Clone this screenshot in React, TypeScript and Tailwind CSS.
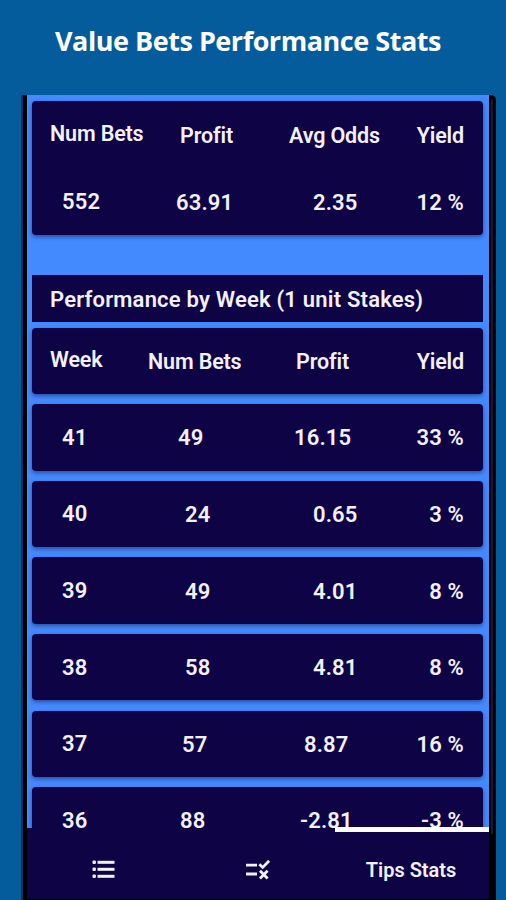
import clsx from 'clsx';

interface Cell {
    text: string;
    // left offset inside the column
    pad: string;
}

interface WeekRow {
    week: string;
    bets: Cell;
    profit: Cell;
    yieldPct: string;
}

const weeks: WeekRow[] = [
    { week: '41', bets: { text: '49', pad: 'pl-[30px]' }, profit: { text: '16.15', pad: 'pl-[6px]' }, yieldPct: '33 %' },
    { week: '40', bets: { text: '24', pad: 'pl-[37px]' }, profit: { text: '0.65', pad: 'pl-[25px]' }, yieldPct: '3 %' },
    { week: '39', bets: { text: '49', pad: 'pl-[37px]' }, profit: { text: '4.01', pad: 'pl-[25px]' }, yieldPct: '8 %' },
    { week: '38', bets: { text: '58', pad: 'pl-[37px]' }, profit: { text: '4.81', pad: 'pl-[25px]' }, yieldPct: '8 %' },
    { week: '37', bets: { text: '57', pad: 'pl-[34px]' }, profit: { text: '8.87', pad: 'pl-[16px]' }, yieldPct: '16 %' },
    { week: '36', bets: { text: '88', pad: 'pl-[32px]' }, profit: { text: '-2.81', pad: 'pl-[12px]' }, yieldPct: '-3 %' },
];

const card = 'bg-[#0e0345] rounded-[4px] shadow-[0_2px_4px_rgba(20,30,80,0.55)]';
const columns = 'grid grid-cols-[116px_140px_112px_1fr] items-center pr-[19px]';
const heading = 'text-[21.5px] tracking-[-0.15px]';
const figures = 'tracking-[0.15px]';

function ListIcon() {
    return (
        <svg className="w-6 h-5" viewBox="0 0 24 20" fill="currentColor">
            {[0.5, 7.5, 14.5].map((y) => (
                <g key={y}>
                    <rect x="0.5" y={y} width="3.4" height="3.6" rx="1" />
                    <rect x="5.5" y={y + 0.3} width="17" height="3" />
                </g>
            ))}
        </svg>
    );
}

function RuleIcon() {
    return (
        <svg className="w-6 h-5" viewBox="0 0 24 20" fill="none" stroke="currentColor" strokeWidth="2.8">
            <path d="M0 5.2h11M0 14h11" />
            <path d="M13.3 4.2l3.4 3.2 6.4-6.6M14 10.8l7.6 7.6M21.6 10.8l-7.6 7.6" />
        </svg>
    );
}

export default function App() {
    return (
        <div className="w-[506px] h-[900px] overflow-hidden bg-[#045c9c] text-[#f3f0fa] font-['Roboto',sans-serif] flex flex-col">
            <h1 className="h-[95px] pt-[23px] pl-[55px] text-[27px] leading-[36px] tracking-[-0.47px] font-bold text-white font-['Open_Sans',sans-serif] whitespace-nowrap">
                Value Bets Performance Stats
            </h1>

            {/* Phone frame */}
            <div className="ml-[21px] w-[475px] h-[805px] flex bg-black rounded-tr-[5px] border-l-2 border-l-[#0b2f66]">
                <div className="ml-[4px] w-[462px] flex flex-col bg-[#448aff] text-[22px] leading-[26px] font-semibold whitespace-nowrap">
                    <div className="h-[733px] overflow-hidden pl-[5px] pr-[6px] pt-[6px]">
                        {/* Totals */}
                        <div className={clsx(card, 'h-[134px] pt-[18px]')}>
                            <div className={clsx(columns, heading, 'h-[34px]')}>
                                <span className="pl-[18px] pb-1">Num Bets</span>
                                <span className="pl-[32px]">Profit</span>
                                <span className="pl-[1px]">Avg Odds</span>
                                <span className="text-right">Yield</span>
                            </div>
                            <div className={clsx(columns, figures, 'mt-[33px] h-[34px]')}>
                                <span className="pl-[30px] pb-0.5">552</span>
                                <span className="pl-[28px]">63.91</span>
                                <span className="pl-[25px]">2.35</span>
                                <span className="text-right">12 %</span>
                            </div>
                        </div>

                        {/* Section title */}
                        <div className="mt-[40px] h-[47px] flex items-center bg-[#0e0345] pl-[18px] pt-[2px] tracking-[0.2px]">
                            Performance by Week (1 unit Stakes)
                        </div>

                        <div className={clsx(card, columns, heading, 'mt-[6px] h-[66px] pt-0.5')}>
                            <span className="pl-[18px] pb-[4px]">Week</span>
                            <span>Num Bets</span>
                            <span className="pl-[8px]">Profit</span>
                            <span className="text-right">Yield</span>
                        </div>

                        {weeks.map((row) => (
                            <div key={row.week} className={clsx(card, columns, figures, 'mt-[10.2px] h-[66.4px] pt-[2px]')}>
                                <span className="pl-[30px] pb-px">{row.week}</span>
                                <span className={row.bets.pad}>{row.bets.text}</span>
                                <span className={row.profit.pad}>{row.profit.text}</span>
                                <span className="text-right">{row.yieldPct}</span>
                            </div>
                        ))}
                    </div>

                    {/* Bottom tabs */}
                    <div className="relative h-[71px] grid grid-cols-3 items-center bg-[#0e0345] pt-[13px]">
                        <div className="absolute -top-px right-0 h-[5px] w-[154px] bg-white" />
                        <span className="flex justify-center">
                            <ListIcon />
                        </span>
                        <span className="flex justify-center">
                            <RuleIcon />
                        </span>
                        <span className="text-center text-[20px] pr-0.5">Tips Stats</span>
                    </div>
                    <div className="h-px bg-black" />
                </div>
                {/* Bezel highlight */}
                <div className="ml-[2px] mt-1 w-[2px] h-[735px] bg-[#0b1d38]" />
            </div>
        </div>
    );
}
